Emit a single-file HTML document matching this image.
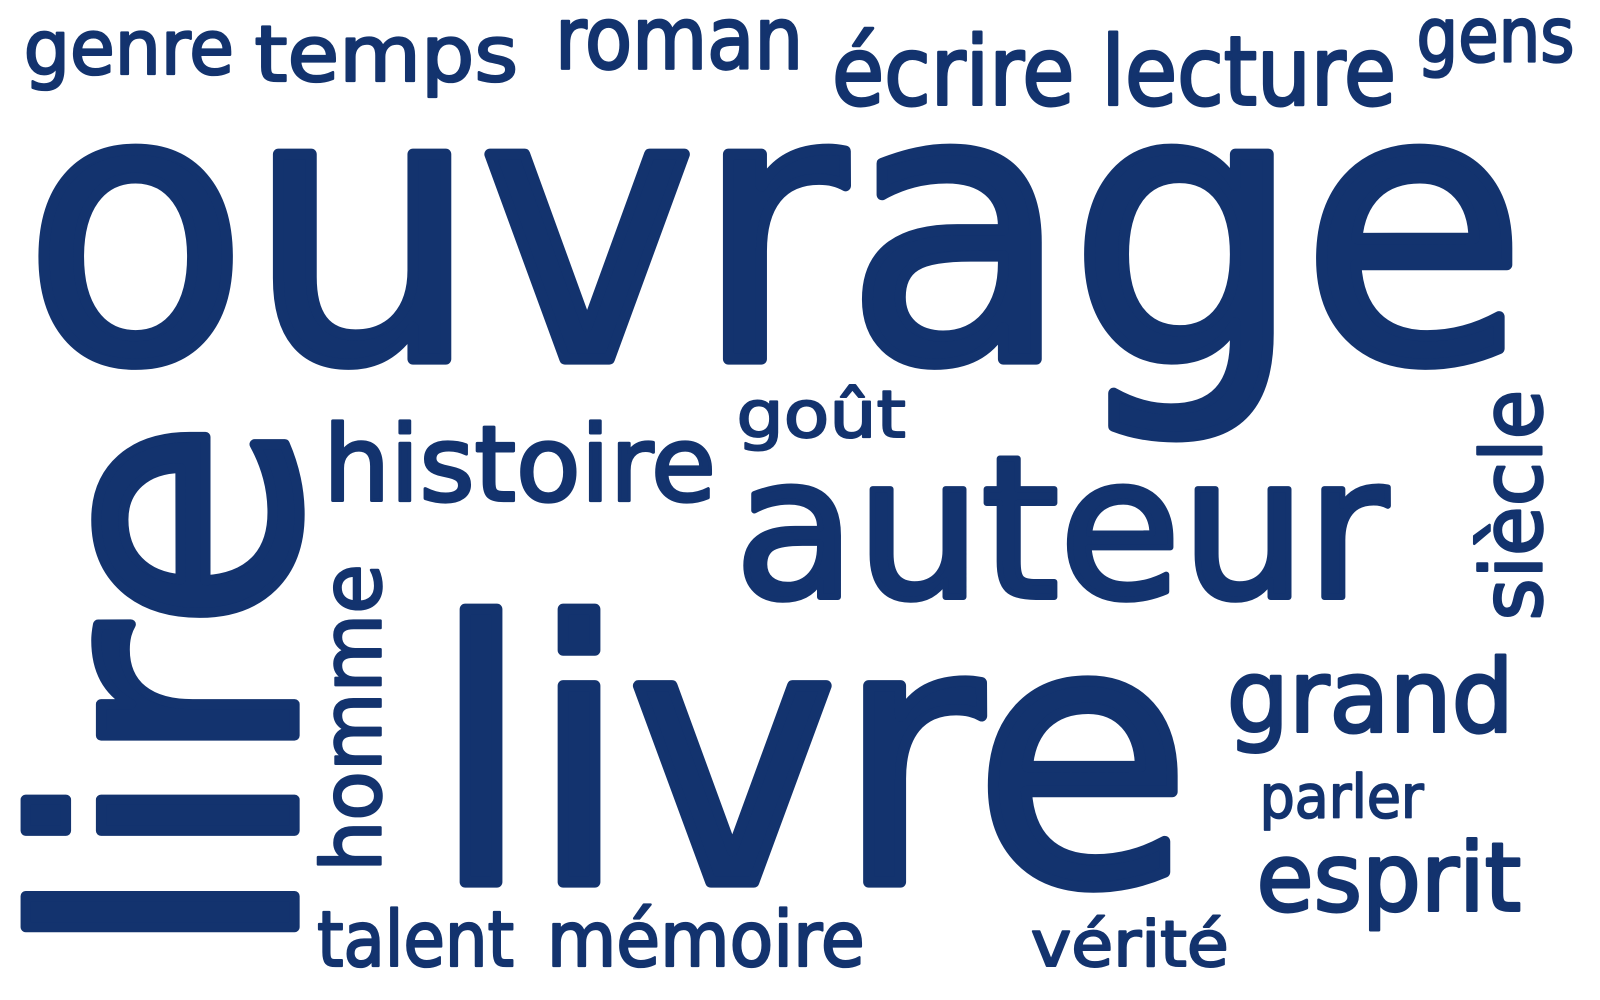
<!DOCTYPE html>
<html><head><meta charset="utf-8"><style>
html,body{margin:0;padding:0;background:#fff;width:1600px;height:1000px;overflow:hidden}
svg text{font-family:"DejaVu Sans","Liberation Sans",sans-serif;font-weight:normal;fill:#13336e;stroke:#13336e;stroke-linejoin:round}
</style></head><body>
<svg width="1600" height="1000" viewBox="0 0 1600 1000" xmlns="http://www.w3.org/2000/svg">
<g transform="translate(-7,0) scale(1.0256,1.0256)">
<text x="30" y="72" font-size="74" stroke-width="2.3" textLength="205" lengthAdjust="spacingAndGlyphs">genre</text>
<text x="255" y="79" font-size="76" stroke-width="2.3" textLength="257" lengthAdjust="spacingAndGlyphs">temps</text>
<text x="548" y="67" font-size="84" stroke-width="2.6" textLength="242" lengthAdjust="spacingAndGlyphs">roman</text>
<text x="818" y="102" font-size="93" stroke-width="2.9" textLength="550" lengthAdjust="spacingAndGlyphs">écrire lecture</text>
<text x="1388" y="60" font-size="74" stroke-width="2.3" textLength="154" lengthAdjust="spacingAndGlyphs">gens</text>
<text x="30" y="350" font-size="365" stroke-width="11" textLength="1465" lengthAdjust="spacingAndGlyphs">ouvrage</text>
<text transform="translate(294,936) rotate(-90)" font-size="345" stroke-width="10" textLength="528" lengthAdjust="spacingAndGlyphs">lire</text>
<text x="322" y="488" font-size="102" stroke-width="3.2" textLength="383" lengthAdjust="spacingAndGlyphs">histoire</text>
<text x="725" y="426" font-size="63" stroke-width="2" textLength="165" lengthAdjust="spacingAndGlyphs">goût</text>
<text x="723" y="582" font-size="192" stroke-width="6" textLength="637" lengthAdjust="spacingAndGlyphs">auteur</text>
<text transform="translate(1510,605) rotate(-90)" font-size="82" stroke-width="2.5" textLength="225" lengthAdjust="spacingAndGlyphs">siècle</text>
<text transform="translate(378,850) rotate(-90)" font-size="80" stroke-width="2.5" textLength="300" lengthAdjust="spacingAndGlyphs">homme</text>
<text x="428" y="860" font-size="350" stroke-width="11" textLength="740" lengthAdjust="spacingAndGlyphs">livre</text>
<text x="1203" y="713" font-size="98" stroke-width="3" textLength="280" lengthAdjust="spacingAndGlyphs">grand</text>
<text x="1235" y="797" font-size="58" stroke-width="1.8" textLength="160" lengthAdjust="spacingAndGlyphs">parler</text>
<text x="1232" y="888" font-size="92" stroke-width="2.9" textLength="258" lengthAdjust="spacingAndGlyphs">esprit</text>
<text x="316" y="942" font-size="75" stroke-width="2.3" textLength="192" lengthAdjust="spacingAndGlyphs">talent</text>
<text x="540" y="942" font-size="75" stroke-width="2.3" textLength="310" lengthAdjust="spacingAndGlyphs">mémoire</text>
<text x="1012" y="942" font-size="62" stroke-width="2" textLength="193" lengthAdjust="spacingAndGlyphs">vérité</text>
</g>
</svg>
</body></html>
